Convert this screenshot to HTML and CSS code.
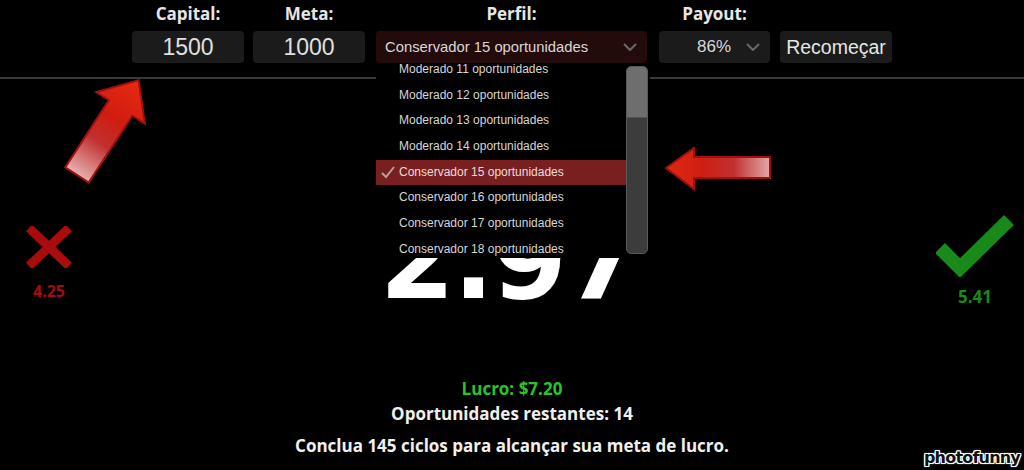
FILE: index.html
```html
<!DOCTYPE html>
<html lang="pt-BR">
<head>
<meta charset="utf-8">
<title>Calculadora</title>
<link rel="stylesheet" href="styles.css">
</head>
<body>
<div class="app">
  <header class="toolbar">
    <div class="field f-capital">
      <span class="lbl">Capital:</span>
      <div class="box input">1500</div>
    </div>
    <div class="field f-meta">
      <span class="lbl">Meta:</span>
      <div class="box input">1000</div>
    </div>
    <div class="field f-perfil">
      <span class="lbl">Perfil:</span>
      <div class="box select select-red">
        <span class="sel-text">Conservador 15 oportunidades</span>
        <svg class="chev" width="14" height="8" viewBox="0 0 14 8"><path d="M1 1 L7 7 L13 1" fill="none" stroke="#6a6a6a" stroke-width="2"/></svg>
      </div>
    </div>
    <div class="field f-payout">
      <span class="lbl">Payout:</span>
      <div class="box select select-pay">
        <span class="sel-text">86%</span>
        <svg class="chev" width="14" height="8" viewBox="0 0 14 8"><path d="M1 1 L7 7 L13 1" fill="none" stroke="#6a6a6a" stroke-width="2"/></svg>
      </div>
    </div>
    <div class="field f-btn">
      <span class="lbl">&nbsp;</span>
      <button class="box btn">Recomeçar</button>
    </div>
  </header>

  <main class="stage">
    <div class="side loss">
      <svg width="46" height="42" viewBox="0 0 46 42"><path d="M3 2 L43 40 M43 2 L3 40" stroke="#a80c0c" stroke-width="9"/></svg>
      <div class="val">4.25</div>
    </div>
    <div class="center">
      <div class="big">2.97</div>
    </div>
    <div class="side win">
      <svg width="78" height="62" viewBox="0 0 78 62"><path d="M4 33 L24 53 L73 5" fill="none" stroke="#198a19" stroke-width="14"/></svg>
      <div class="val">5.41</div>
    </div>
  </main>

  <section class="stats">
    <p class="lucro">Lucro: $7.20</p>
    <p class="rest">Oportunidades restantes: 14</p>
    <p class="conc">Conclua 145 ciclos para alcançar sua meta de lucro.</p>
  </section>

  <div class="dropdown">
    <ul class="opts">
      <li class="opt">Moderado 11 oportunidades</li>
      <li class="opt">Moderado 12 oportunidades</li>
      <li class="opt">Moderado 13 oportunidades</li>
      <li class="opt">Moderado 14 oportunidades</li>
      <li class="opt selected"><svg class="tick" width="14" height="13" viewBox="0 0 14 13"><path d="M1 7 L5 11 L13 1" fill="none" stroke="#b9a0a0" stroke-width="2"/></svg>Conservador 15 oportunidades</li>
      <li class="opt">Conservador 16 oportunidades</li>
      <li class="opt">Conservador 17 oportunidades</li>
      <li class="opt">Conservador 18 oportunidades</li>
    </ul>
    <div class="scroll"><div class="thumb"></div></div>
  </div>

  <svg class="arrow arrow-up" width="130" height="130" viewBox="0 0 130 130">
    <defs>
      <linearGradient id="gUp" x1="0" y1="0" x2="1" y2="0">
        <stop offset="0" stop-color="#e8b0b0"/>
        <stop offset="0.35" stop-color="#c03030"/>
        <stop offset="0.6" stop-color="#d01c10"/>
        <stop offset="1" stop-color="#e82a10"/>
      </linearGradient>
    </defs>
    <g transform="translate(25 109) rotate(-57)">
      <polygon points="0,-14 80,-14 80,-29 113,0 80,29 80,14 0,14" fill="url(#gUp)" stroke="#a01010" stroke-width="2"/>
    </g>
  </svg>

  <svg class="arrow arrow-left" width="110" height="44" viewBox="0 0 110 44">
    <defs>
      <linearGradient id="gLeft" x1="1" y1="0" x2="0" y2="0">
        <stop offset="0" stop-color="#e4a8a8"/>
        <stop offset="0.35" stop-color="#c03030"/>
        <stop offset="0.65" stop-color="#cf1e12"/>
        <stop offset="1" stop-color="#e02810"/>
      </linearGradient>
    </defs>
    <polygon points="2,21 30,1 30,10 106,10 106,31 30,31 30,42" fill="url(#gLeft)" stroke="#a01010" stroke-width="2"/>
  </svg>

  <div class="logo">photofunny</div>
</div>
</body>
</html>
```

FILE: styles.css
```css
* { box-sizing: border-box; }
html, body { margin: 0; padding: 0; background: #000; }
body { width: 1024px; height: 470px; overflow: hidden; font-family: "Open Sans", "Noto Sans", sans-serif; color: #e8e8e8; }

.app { position: relative; width: 1024px; height: 470px; background: #000; }

.toolbar {
  display: flex;
  align-items: flex-start;
  height: 79px;
  padding-left: 132px;
  border-bottom: 2px solid #3a3a3a;
}
.field { display: flex; flex-direction: column; align-items: center; }
.lbl { font-weight: 700; font-size: 17px; line-height: 20px; height: 20px; margin-top: 4px; color: #e6e6e6; }

.box {
  margin-top: 7px;
  height: 32px;
  border-radius: 4px;
  background: #1b1b1b;
  border: none;
  font-family: "Liberation Sans", Arial, sans-serif;
  color: #e0e0e0;
  display: flex;
  align-items: center;
}
.input { justify-content: center; font-size: 23px; }
.f-capital .box, .f-meta .box { width: 112px; }
.f-meta { margin-left: 9px; }
.f-perfil { margin-left: 11px; }
.f-perfil .box { width: 271px; }
.select-red { background: #240b0b; padding: 0 10px 0 9px; justify-content: space-between; }
.select-red .sel-text { font-size: 14.8px; color: #d8d8d8; }
.f-payout { margin-left: 12px; }
.select-pay { width: 111px; padding: 0 10px 0 38px; justify-content: space-between; }
.select-pay .sel-text { font-size: 17px; color: #d8d8d8; }
.f-btn { margin-left: 10px; }
.btn { width: 112px; justify-content: center; font-size: 19.5px; color: #e6e6e6; padding: 0; }

.stage {
  display: grid;
  grid-template-columns: 98px 1fr 98px;
  align-items: start;
  height: 299px;
}
.side { display: flex; flex-direction: column; align-items: center; }
.loss { margin-top: 147px; }
.loss .val { color: #a80c0c; font-weight: 700; font-size: 16px; line-height: 20px; margin-top: 13px; }
.win { margin-top: 136px; }
.win .val { color: #198a19; font-weight: 700; font-size: 17px; line-height: 20px; margin-top: 10px; }
.center { display: flex; justify-content: center; padding-right: 6px; }
.big {
  font-family: "DejaVu Sans", sans-serif;
  font-weight: 700;
  font-size: 108px;
  line-height: 100px;
  margin-top: 132px;
  color: #fff;
  letter-spacing: -2px;
}

.stats { text-align: center; }
.stats p { margin: 0; font-weight: 700; font-size: 17px; }
.lucro { color: #2ac42a; line-height: 22px; }
.rest { color: #f0f0f0; line-height: 28px; }
.conc { color: #f0f0f0; line-height: 36px; }

.dropdown {
  position: absolute;
  left: 376px;
  top: 63px;
  width: 274px;
  height: 195px;
  background: #000;
  overflow: hidden;
}
.opts { list-style: none; margin: -6px 0 0; padding: 0; width: 250px; }
.opt {
  height: 25.67px;
  line-height: 25.67px;
  padding-left: 23px;
  font-family: "Liberation Sans", Arial, sans-serif;
  font-size: 12px;
  color: #d6d6d6;
  position: relative;
  white-space: nowrap;
}
.opt.selected { background: #7a1f1f; color: #e8dede; }
.tick { position: absolute; left: 5px; top: 6px; }
.scroll {
  position: absolute;
  left: 250px;
  top: 3px;
  width: 22px;
  height: 188px;
  border-radius: 5px;
  background: #3c3c3c;
  border: 1px solid #5a5a5a;
  overflow: hidden;
}
.thumb { height: 51px; background: #6e6e6e; border-bottom: 1px solid #555; }

.arrow { position: absolute; }
.arrow-up { left: 52px; top: 66px; }
.arrow-left { left: 664px; top: 147px; }

.logo {
  position: absolute;
  right: 4px;
  bottom: 3px;
  font-family: "DejaVu Sans", sans-serif;
  font-weight: 700;
  font-size: 16px;
  letter-spacing: -0.8px;
  color: #111;
  text-shadow: 1px 0 0 #fff, -1px 0 0 #fff, 0 1px 0 #fff, 0 -1px 0 #fff, 1px 1px 0 #fff, -1px -1px 0 #fff, 1px -1px 0 #fff, -1px 1px 0 #fff, 0 0 3px #fff;
}
```
